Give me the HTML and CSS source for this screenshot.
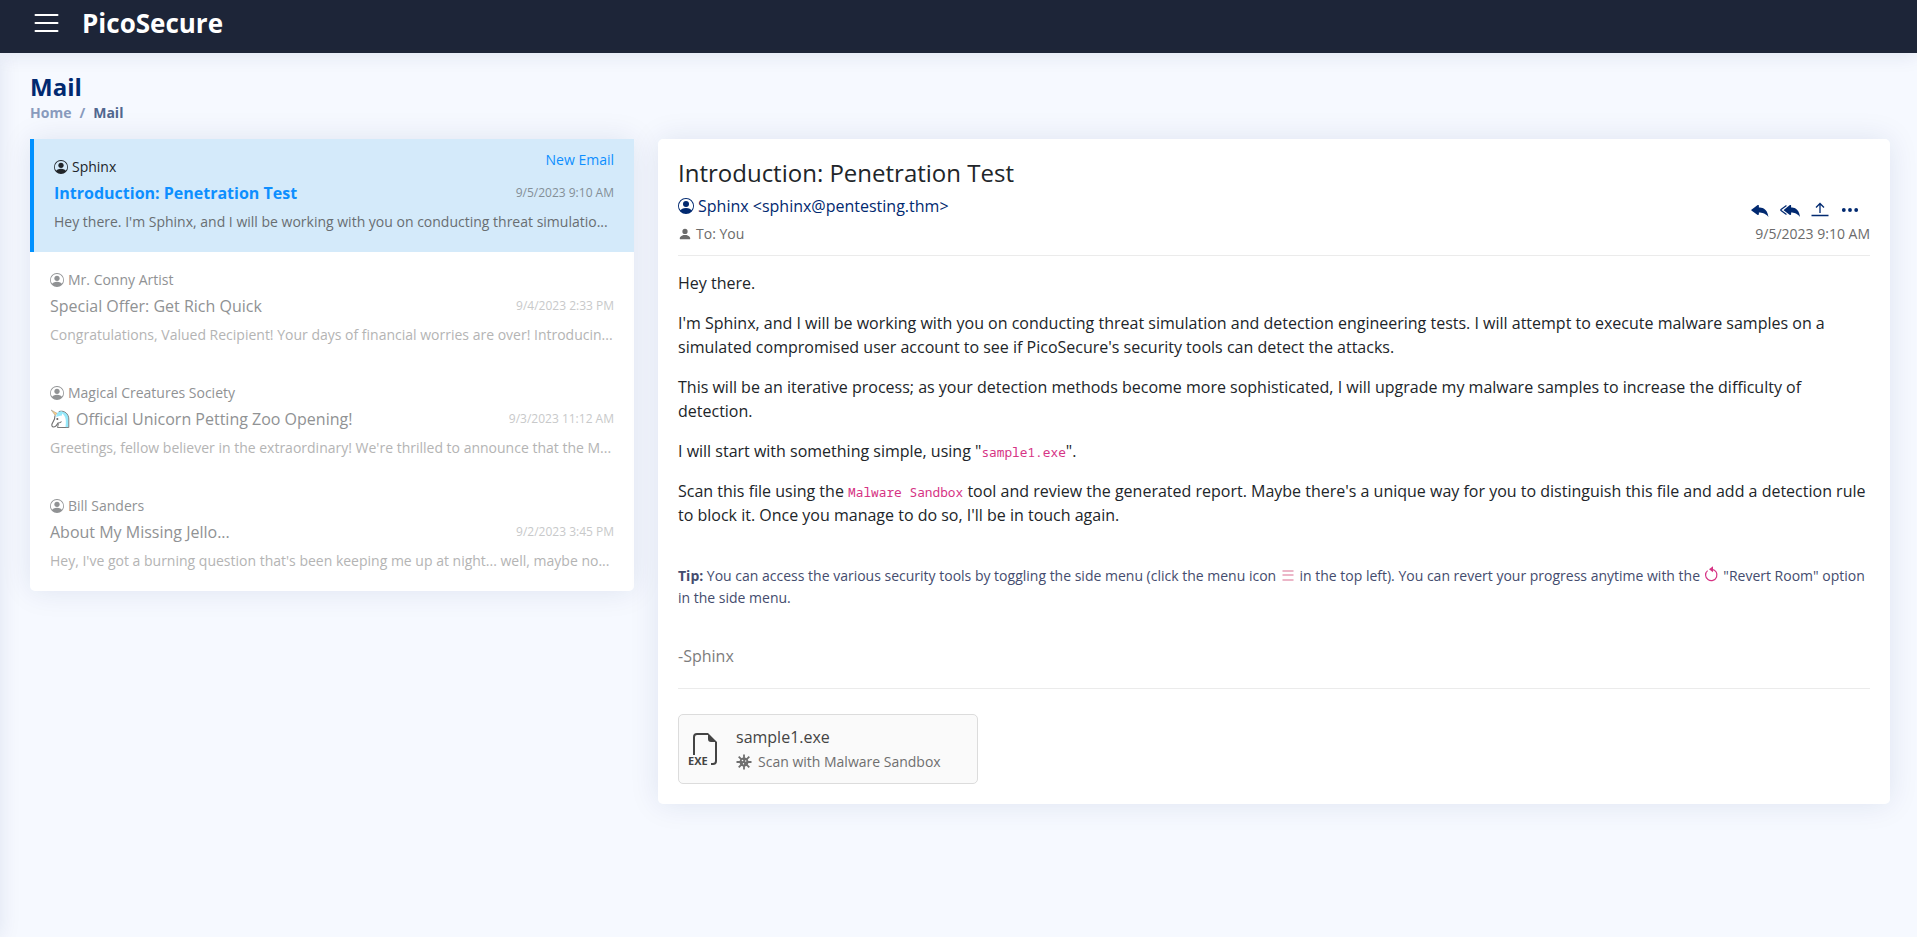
FILE: index.html
```html
<!DOCTYPE html>
<html lang="en">
<head>
<meta charset="utf-8">
<title>PicoSecure - Mail</title>
<link rel="stylesheet" href="styles.css">
</head>
<body>
<svg class="defs" width="0" height="0">
  <symbol id="person-circle" viewBox="0 0 16 16"><path d="M11 6a3 3 0 1 1-6 0 3 3 0 0 1 6 0z"/><path fill-rule="evenodd" d="M0 8a8 8 0 1 1 16 0A8 8 0 0 1 0 8zm8-7a7 7 0 0 0-5.468 11.37C3.242 11.226 4.805 10 8 10s4.757 1.225 5.468 2.37A7 7 0 0 0 8 1z"/></symbol>
</svg>
<header class="header">
  <svg class="menu-toggle" viewBox="0 0 32 32"><path d="M5.500 8h22M5.500 16h22M5.500 24h22"/></svg>
  <span class="logo">PicoSecure</span>
</header>
<aside class="sidebar"></aside>
<main class="main">
  <h1 class="page-title">Mail</h1>
  <nav class="breadcrumb"><span>Home</span><span class="sep">/</span><span class="current">Mail</span></nav>
  <div class="columns">
    <section class="card mail-list">
      <article class="mail active">
        <div class="from"><svg><use href="#person-circle"/></svg>Sphinx<span class="new">New Email</span></div>
        <div class="row"><span class="subject">Introduction: Penetration Test</span><time>9/5/2023 9:10 AM</time></div>
        <p class="preview">Hey there. I'm Sphinx, and I will be working with you on conducting threat simulatio...</p>
      </article>
      <article class="mail">
        <div class="from"><svg><use href="#person-circle"/></svg>Mr. Conny Artist</div>
        <div class="row"><span class="subject">Special Offer: Get Rich Quick</span><time>9/4/2023 2:33 PM</time></div>
        <p class="preview">Congratulations, Valued Recipient! Your days of financial worries are over! Introducin...</p>
      </article>
      <article class="mail">
        <div class="from"><svg><use href="#person-circle"/></svg>Magical Creatures Society</div>
        <div class="row"><span class="subject"><svg class="unicorn" viewBox="0 0 20 20"><path fill="#5fdcf8" stroke="#333" stroke-width=".9" d="M9 2.500C14.500 1 18.800 5 18.800 10v8.500H12L10 14z"/><path fill="#fff" d="M12 4.500c3.500 2 4.500 6 3.500 13.500h-4z"/><path fill="#fff" d="M6 5 8 3l2 3c4 1.500 5 4 4.500 8l.5 4.500H7.500z"/><path fill="#fff" stroke="#222" stroke-width="1.100" d="M11.500 12.500c-1 1.500-2.500 1.500-3.500 1.500-1 2-2.500 4-4.500 4-1.500 0-2-1.500-1.500-3L4.500 10 5 6.500"/><path fill="none" stroke="#222" stroke-width=".9" d="M8.500 14.500 7.500 18.500h8"/><path fill="#5fdcf8" d="m7.500 3.500 4.500-1.500-1 4.500L6 8z"/><path fill="#ffb83d" stroke="#555" stroke-width=".5" d="M1.200 1 7 4.300 5.300 6.500z"/><path fill="#222" d="M6.500 9h1.700v2H6.500z"/></svg>Official Unicorn Petting Zoo Opening!</span><time>9/3/2023 11:12 AM</time></div>
        <p class="preview">Greetings, fellow believer in the extraordinary! We're thrilled to announce that the M...</p>
      </article>
      <article class="mail">
        <div class="from"><svg><use href="#person-circle"/></svg>Bill Sanders</div>
        <div class="row"><span class="subject">About My Missing Jello...</span><time>9/2/2023 3:45 PM</time></div>
        <p class="preview">Hey, I've got a burning question that's been keeping me up at night... well, maybe no...</p>
      </article>
    </section>
    <section class="card message">
      <h2 class="title">Introduction: Penetration Test</h2>
      <div class="sender"><svg><use href="#person-circle"/></svg>Sphinx &lt;sphinx@pentesting.thm&gt;</div>
      <div class="meta">
        <span class="to"><svg viewBox="0 0 16 16"><path d="M3 14s-1 0-1-1 1-4 6-4 6 3 6 4-1 1-1 1H3zm5-6a3 3 0 1 0 0-6 3 3 0 0 0 0 6z"/></svg>To: You</span>
        <div class="side">
          <div class="actions">
            <svg viewBox="0 0 16 16"><path d="M5.921 12.400.653 8.720a.719.719 0 0 1 0-1.238L5.921 3.600A.716.716 0 0 1 7 4.219V5.800c2 0 7.500.2 8.500 8.400-2.500-4-8.500-4-8.500-4v1.581c0 .56-.606.898-1.079.62z"/></svg>
            <svg class="reply-all" viewBox="0 0 18 16"><path d="M8.921 12.400 3.853 8.720a.719.719 0 0 1 0-1.238L8.921 3.600A.716.716 0 0 1 10 4.219V5.800c2 0 7 .2 8 8.400-2.500-4-8-4-8-4v1.581c0 .56-.606.898-1.079.62z"/><path fill="none" stroke="currentColor" stroke-width="1.100" stroke-linecap="round" d="M5.500 4.200.900 7.600a.5.5 0 0 0 0 .8L5.500 11.800"/></svg>
            <svg class="upload" viewBox="0 0 18 18"><path d="M5 6.500 9 2.500l4 4M9 2.500V12M.5 14.500h17"/></svg>
            <svg viewBox="0 0 16 16"><path d="M2.500 9.700a1.700 1.700 0 1 1 0-3.400 1.700 1.700 0 0 1 0 3.400zm5.500 0a1.700 1.700 0 1 1 0-3.400 1.700 1.700 0 0 1 0 3.400zm5.500 0a1.700 1.700 0 1 1 0-3.400 1.700 1.700 0 0 1 0 3.400z"/></svg>
          </div>
          <time>9/5/2023 9:10 AM</time>
        </div>
      </div>
      <div class="body">
        <p>Hey there.</p>
        <p>I'm Sphinx, and I will be working with you on conducting threat simulation and detection engineering tests. I will attempt to execute malware samples on a simulated compromised user account to see if PicoSecure's security tools can detect the attacks.</p>
        <p>This will be an iterative process; as your detection methods become more sophisticated, I will upgrade my malware samples to increase the difficulty of detection.</p>
        <p>I will start with something simple, using "<code>sample1.exe</code>".</p>
        <p>Scan this file using the <code>Malware Sandbox</code> tool and review the generated report. Maybe there's a unique way for you to distinguish this file and add a detection rule to block it. Once you manage to do so, I'll be in touch again.</p>
        <p class="tip"><b>Tip:</b> You can access the various security tools by toggling the side menu (click the menu icon <svg class="tip-list" viewBox="0 0 16 14"><path d="M2.500 3h11M2.500 7h11M2.500 12h11"/></svg> in the top left). You can revert your progress anytime with the <svg class="tip-revert" viewBox="0 0 16 16"><path d="M3.600 4.600A5.700 5.700 0 1 0 8 3.300"/><path class="tip-arrow" d="M9 .200v6L5 3.200z"/></svg> "Revert Room" option in the side menu.</p>
        <p class="sign">-Sphinx</p>
      </div>
      <div class="attachment">
        <svg class="exe" viewBox="0 0 16 16"><path fill-rule="evenodd" d="M14 4.500V14a2 2 0 0 1-2 2h-1v-1h1a1 1 0 0 0 1-1V4.500h-2A1.500 1.500 0 0 1 9.500 3V1H4a1 1 0 0 0-1 1v9H2V2a2 2 0 0 1 2-2h5.500z"/><text x="-.500" y="15.900">EXE</text></svg>
        <div class="file">
          <span class="name">sample1.exe</span>
          <span class="scan"><svg viewBox="0 0 16 16"><circle cx="8" cy="8" r="4.500"/><path d="M8 .500v15M.500 8h15M2.700 2.700l10.600 10.600M13.300 2.700 2.700 13.300" stroke="currentColor" stroke-width="1.800"/><g fill="#fafafa"><circle cx="6.500" cy="6.500" r=".8"/><circle cx="9.700" cy="7" r=".7"/><circle cx="7.500" cy="9.700" r=".7"/></g></svg>Scan with Malware Sandbox</span>
        </div>
      </div>
    </section>
  </div>
</main>
</body>
</html>
```
FILE: styles.css
```css
* { box-sizing: border-box; }
body {
  margin: 0;
  min-height: 937px;
  overflow: hidden;
  background: #f6f9ff;
  color: #212529;
  font: 16px/24px "Open Sans", sans-serif;
}
svg { fill: currentColor; flex: none; }
.defs { display: block; position: absolute; }
h1, h2, p { margin: 0; font-weight: 400; }

.header {
  display: flex;
  position: relative;
  z-index: 2;
  height: 53px;
  padding: 7px 30px 0;
  background: #1d2538;
  color: #fff;
  box-shadow: 0 2px 20px rgba(1, 41, 112, .1);
}
.menu-toggle { width: 32px; height: 32px; margin-right: 20px; fill: none; stroke: currentColor; stroke-width: 2; stroke-linecap: round; }
.logo { font-size: 26px; font-weight: 700; line-height: 33px; }
.sidebar {
  position: absolute;
  z-index: 1;
  top: 53px;
  bottom: 0;
  left: -300px;
  width: 300px;
  box-shadow: 0 0 20px rgba(1, 41, 112, .1);
}

.main { padding: 19px 27px 0 30px; }
.page-title { font-size: 24px; font-weight: 700; line-height: 29px; color: #012970; }
.breadcrumb { display: flex; gap: 8px; margin-top: 1px; font-size: 14px; font-weight: 700; line-height: 21px; color: #899bbd; }
.breadcrumb .current { color: #51678f; }
.columns { display: grid; grid-template-columns: 604px 1fr; gap: 24px; align-items: start; margin-top: 16px; }
.card { background: #fff; border-radius: 5px; box-shadow: 0 0 30px rgba(1, 41, 112, .1); }

.mail { position: relative; height: 113px; padding: 17px 20px 0; color: #909294; }
.mail.active { background: #d4eafa; border-left: 4px solid #0091ff; color: #212529; }
.from { display: flex; align-items: center; gap: 4px; font-size: 14px; line-height: 22px; }
.from svg { width: 14px; height: 14px; }
.new { position: absolute; top: 10px; right: 20px; color: #0d8fff; }
.row { display: flex; justify-content: space-between; margin-top: 3px; }
.row time { font-size: 12px; line-height: 23px; color: #c8c9ca; }
.preview { margin-top: 6px; font-size: 14px; line-height: 21px; color: #b4b4b4; white-space: nowrap; }
.active .subject { font-weight: 700; color: #0d8fff; }
.active time { color: #848f97; }
.active .preview { color: #696e72; }
.unicorn { width: 20px; height: 20px; margin-right: 6px; vertical-align: -4px; opacity: .65; }

.message { height: 665px; padding: 19px 20px 20px; }
.title { font-size: 24px; line-height: 29px; }
.sender { display: flex; align-items: center; gap: 4px; margin-top: 7px; color: #012970; }
.sender svg { width: 16px; height: 16px; }
.meta { display: flex; justify-content: space-between; align-items: flex-end; height: 38px; padding-bottom: 10px; border-bottom: 1px solid #ebebeb; font-size: 14px; line-height: 22px; color: #6b6b6b; }
.to { display: flex; align-items: center; gap: 4px; }
.to svg { width: 14px; height: 14px; }
.side { display: flex; flex-direction: column; align-items: flex-end; gap: 4px; }
.actions { display: flex; gap: 12px; padding-right: 11px; color: #012970; }
.actions svg { width: 18px; height: 18px; }
.actions .reply-all { width: 20px; margin: 0 -1px; }
.upload { fill: none; stroke: currentColor; stroke-width: 1.3; }
.body { padding-top: 15px; border-bottom: 1px solid #ebebeb; height: 433px; }
.body p { margin-bottom: 16px; }
code { font: 12.8px/16px "Noto Sans Mono", "DejaVu Sans Mono", monospace; color: #d63384; }
.body .tip { margin: 38px 0 35px; font-size: 14px; line-height: 22px; color: #444c6e; }
.tip svg { fill: none; stroke: #d63384; stroke-width: 1.2; vertical-align: -1px; }
.tip .tip-list { width: 16px; height: 14px; stroke: #ecb6c8; stroke-width: 2; }
.tip .tip-revert { width: 16px; height: 16px; }
.tip .tip-arrow { fill: #d63384; stroke: none; }
.body .sign { margin: 0; color: #7d7d7d; }

.attachment { display: flex; width: 300px; height: 70px; margin-top: 25px; padding: 10px 9px; background: #fafafa; border: 1px solid #dcdcdc; border-radius: 5px; }
.exe { width: 32px; height: 32px; margin: 8px -1px 0 1px; color: #444; overflow: visible; }
.exe text { font: 700 5.500px "Open Sans", sans-serif; }
.file { display: flex; flex-direction: column; margin-left: 16px; }
.name { line-height: 24px; color: #444; }
.scan { display: flex; align-items: center; gap: 6px; font-size: 14px; line-height: 25px; color: #6f6f6f; }
.scan svg { width: 16px; height: 16px; }
```
